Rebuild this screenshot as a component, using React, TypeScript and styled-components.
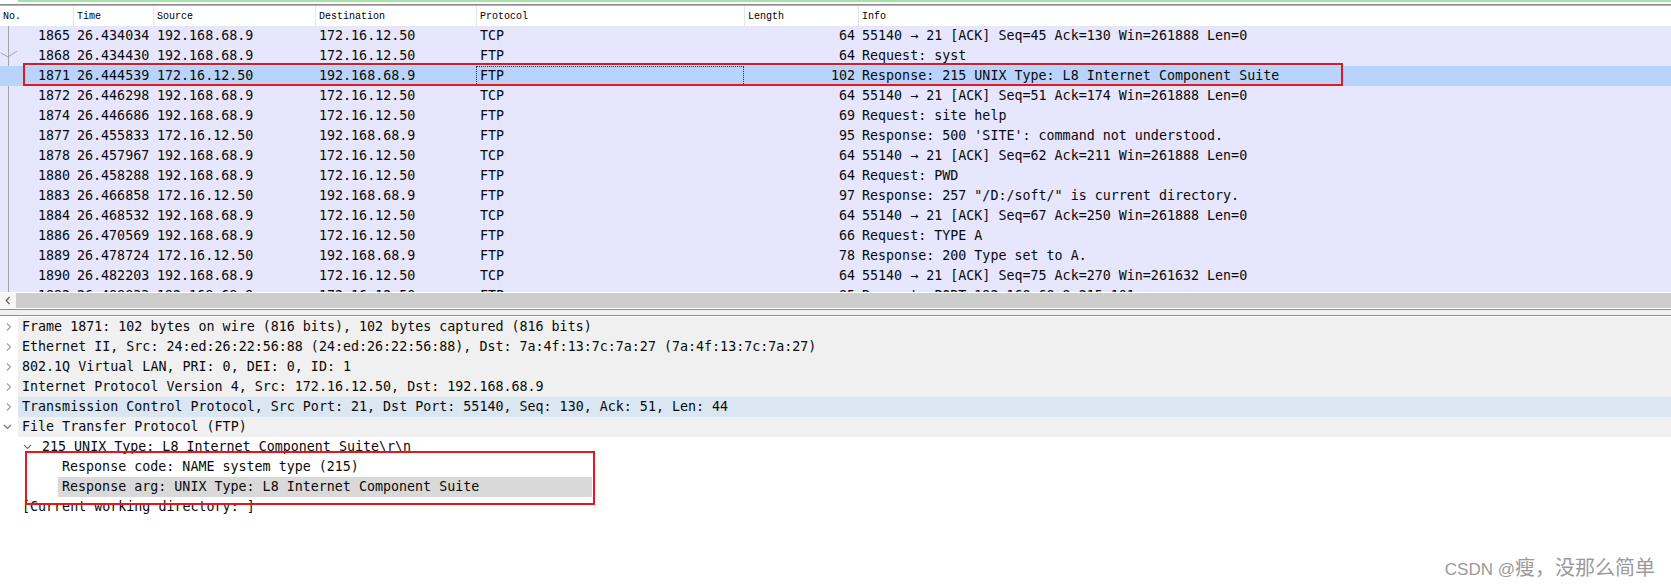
import React from "react";
import styled, { createGlobalStyle } from "styled-components";

const GlobalStyle = createGlobalStyle`
  html, body { margin: 0; padding: 0; background: #ffffff; }
  body { font-family: "DejaVu Sans Mono", "Liberation Mono", monospace; }
`;

const COLS = "73px 80px 162px 161px 268px 114px 1fr";

const Page = styled.div`
  position: relative;
  width: 1671px;
  height: 585px;
  overflow: hidden;
  display: flex;
  flex-direction: column;
  background: #ffffff;
`;

const TopStrip = styled.div`
  flex-shrink: 0;
  height: 6px;
  display: flex;
  flex-direction: column;
`;

const FilterEdge = styled.div`
  height: 2px;
  margin-left: 18px;
  background: #a3e3a3;
`;

const StripGap = styled.div`
  height: 2px;
`;

const StripRule = styled.div`
  height: 2px;
  border-top: 1px solid #8a8a8a;
  background: #b4b4b4;
  box-sizing: border-box;
`;

const HeaderRow = styled.div`
  flex-shrink: 0;
  height: 20px;
  display: grid;
  grid-template-columns: ${COLS};
  font-family: "Liberation Mono", monospace;
  font-size: 10px;
  line-height: 21px;
  color: #000;
  background: #fff;
`;

const HeaderCell = styled.div<{ $first?: boolean }>`
  padding-left: 3px;
  border-left: ${(p) => (p.$first ? "none" : "1px solid #e5e5e5")};
  white-space: nowrap;
  overflow: hidden;
`;

const ListBody = styled.div`
  flex-shrink: 0;
  height: 266px;
  overflow: hidden;
  background: #fff;
`;

const PacketRow = styled.div<{ $selected?: boolean }>`
  position: relative;
  height: 20px;
  display: grid;
  grid-template-columns: ${COLS};
  font-size: 13.33px;
  line-height: 20px;
  color: #0a0a0a;
  white-space: nowrap;
  background: ${(p) => (p.$selected ? "#b9d4fc" : "#e6e6fe")};
`;

const Cell = styled.div<{ $align?: "left" | "right"; $focus?: boolean }>`
  position: relative;
  text-align: ${(p) => p.$align || "left"};
  padding: ${(p) => (p.$align === "right" ? "0 3px 0 0" : "0 0 0 4px")};
  box-sizing: border-box;
  overflow: ${(p) => (p.$align === "right" ? "hidden" : "visible")};
  outline: ${(p) => (p.$focus ? "1px dotted #333" : "none")};
  outline-offset: -1px;
`;

const ThreadLine = styled.span`
  position: absolute;
  left: 8px;
  top: 0;
  bottom: 0;
  width: 1px;
  background: #a4a4a4;
`;

const AckMark = styled.svg`
  position: absolute;
  left: 0;
  top: 5px;
`;

const RedBox = styled.div<{ $left: number; $top: number; $w: number; $h: number }>`
  position: absolute;
  left: ${(p) => p.$left}px;
  top: ${(p) => p.$top}px;
  width: ${(p) => p.$w}px;
  height: ${(p) => p.$h}px;
  border: 2px solid #e8151f;
  box-sizing: border-box;
  pointer-events: none;
  z-index: 3;
`;

const ScrollGap = styled.div<{ $color: string; $h: number }>`
  flex-shrink: 0;
  height: ${(p) => p.$h}px;
  background: ${(p) => p.$color};
`;

const HScrollbar = styled.div`
  flex-shrink: 0;
  height: 15px;
  display: flex;
  background: #f0f0f0;
`;

const ScrollArrow = styled.div`
  width: 16px;
  display: flex;
  align-items: center;
  justify-content: center;
  background: #f6f6f6;
`;

const ScrollThumb = styled.div`
  flex: 1;
  background: #cdcdcd;
`;

const DetailTree = styled.div`
  position: relative;
  flex: 1;
  display: flex;
  flex-direction: column;
  padding-top: 1px;
  background: #fff;
`;

const TreeRow = styled.div`
  display: flex;
  height: 20px;
  line-height: 20px;
  font-size: 13.33px;
  color: #0a0a0a;
  white-space: nowrap;
`;

const Gutter = styled.div<{ $level: number }>`
  flex-shrink: 0;
  width: ${(p) => 18 + p.$level * 20}px;
  display: flex;
  align-items: center;
  justify-content: flex-end;
  padding-right: 6px;
  box-sizing: border-box;
`;

const Label = styled.div<{ $tone: "plain" | "band" | "hover" | "selected" }>`
  padding-left: 4px;
  flex: ${(p) => (p.$tone === "selected" ? "0 0 534px" : "1")};
  box-sizing: border-box;
  background: ${(p) =>
    p.$tone === "band"
      ? "#f0f0f0"
      : p.$tone === "hover"
      ? "#dae6f1"
      : p.$tone === "selected"
      ? "#d9d9d9"
      : "transparent"};
`;

const Watermark = styled.div`
  position: absolute;
  right: 16px;
  top: 552px;
  color: #9a9a9a;
  white-space: nowrap;
  display: flex;
  align-items: baseline;
`;

const WmLatin = styled.span`
  font-family: "Liberation Sans", Arial, sans-serif;
  font-size: 17px;
`;

const WmCjk = styled.span`
  font-family: "Noto Sans CJK SC", sans-serif;
  font-size: 20px;
`;

type Packet = [string, string, string, string, string, string, string];

const packets: Packet[] = [
  ["1865", "26.434034", "192.168.68.9", "172.16.12.50", "TCP", "64", "55140 → 21 [ACK] Seq=45 Ack=130 Win=261888 Len=0"],
  ["1868", "26.434430", "192.168.68.9", "172.16.12.50", "FTP", "64", "Request: syst"],
  ["1871", "26.444539", "172.16.12.50", "192.168.68.9", "FTP", "102", "Response: 215 UNIX Type: L8 Internet Component Suite"],
  ["1872", "26.446298", "192.168.68.9", "172.16.12.50", "TCP", "64", "55140 → 21 [ACK] Seq=51 Ack=174 Win=261888 Len=0"],
  ["1874", "26.446686", "192.168.68.9", "172.16.12.50", "FTP", "69", "Request: site help"],
  ["1877", "26.455833", "172.16.12.50", "192.168.68.9", "FTP", "95", "Response: 500 'SITE': command not understood."],
  ["1878", "26.457967", "192.168.68.9", "172.16.12.50", "TCP", "64", "55140 → 21 [ACK] Seq=62 Ack=211 Win=261888 Len=0"],
  ["1880", "26.458288", "192.168.68.9", "172.16.12.50", "FTP", "64", "Request: PWD"],
  ["1883", "26.466858", "172.16.12.50", "192.168.68.9", "FTP", "97", 'Response: 257 "/D:/soft/" is current directory.'],
  ["1884", "26.468532", "192.168.68.9", "172.16.12.50", "TCP", "64", "55140 → 21 [ACK] Seq=67 Ack=250 Win=261888 Len=0"],
  ["1886", "26.470569", "192.168.68.9", "172.16.12.50", "FTP", "66", "Request: TYPE A"],
  ["1889", "26.478724", "172.16.12.50", "192.168.68.9", "FTP", "78", "Response: 200 Type set to A."],
  ["1890", "26.482203", "192.168.68.9", "172.16.12.50", "TCP", "64", "55140 → 21 [ACK] Seq=75 Ack=270 Win=261632 Len=0"],
  ["1892", "26.488833", "192.168.68.9", "172.16.12.50", "FTP", "85", "Request: PORT 192,168,68,9,215,101"],
];

type TreeItem = {
  level: number;
  arrow?: "closed" | "open";
  tone: "plain" | "band" | "hover" | "selected";
  text: string;
};

const tree: TreeItem[] = [
  { level: 0, arrow: "closed", tone: "band", text: "Frame 1871: 102 bytes on wire (816 bits), 102 bytes captured (816 bits)" },
  { level: 0, arrow: "closed", tone: "band", text: "Ethernet II, Src: 24:ed:26:22:56:88 (24:ed:26:22:56:88), Dst: 7a:4f:13:7c:7a:27 (7a:4f:13:7c:7a:27)" },
  { level: 0, arrow: "closed", tone: "band", text: "802.1Q Virtual LAN, PRI: 0, DEI: 0, ID: 1" },
  { level: 0, arrow: "closed", tone: "band", text: "Internet Protocol Version 4, Src: 172.16.12.50, Dst: 192.168.68.9" },
  { level: 0, arrow: "closed", tone: "hover", text: "Transmission Control Protocol, Src Port: 21, Dst Port: 55140, Seq: 130, Ack: 51, Len: 44" },
  { level: 0, arrow: "open", tone: "band", text: "File Transfer Protocol (FTP)" },
  { level: 1, arrow: "open", tone: "plain", text: "215 UNIX Type: L8 Internet Component Suite\\r\\n" },
  { level: 2, tone: "plain", text: "Response code: NAME system type (215)" },
  { level: 2, tone: "selected", text: "Response arg: UNIX Type: L8 Internet Component Suite" },
  { level: 0, tone: "plain", text: "[Current working directory: ]" },
];

const Chevron: React.FC<{ kind: "closed" | "open" }> = ({ kind }) =>
  kind === "closed" ? (
    <svg width="6" height="10" viewBox="0 0 6 10">
      <polyline points="1,1.5 4.5,5 1,8.5" fill="none" stroke="#9c9c9c" strokeWidth="1.1" />
    </svg>
  ) : (
    <svg width="9" height="6" viewBox="0 0 9 6">
      <polyline points="1,1 4.5,4.5 8,1" fill="none" stroke="#707070" strokeWidth="1.1" />
    </svg>
  );

export default function App() {
  return (
    <>
      <GlobalStyle />
      <Page>
        <TopStrip>
          <FilterEdge />
          <StripGap />
          <StripRule />
        </TopStrip>

        <HeaderRow>
          <HeaderCell $first>No.</HeaderCell>
          <HeaderCell>Time</HeaderCell>
          <HeaderCell>Source</HeaderCell>
          <HeaderCell>Destination</HeaderCell>
          <HeaderCell>Protocol</HeaderCell>
          <HeaderCell>Length</HeaderCell>
          <HeaderCell>Info</HeaderCell>
        </HeaderRow>

        <ListBody>
          {packets.map((p) => {
            const selected = p[0] === "1871";
            return (
              <PacketRow key={p[0]} $selected={selected}>
                <Cell $align="right">
                  {!selected && <ThreadLine />}
                  {p[0] === "1868" && (
                    <AckMark width="18" height="8" viewBox="0 0 18 8">
                      <polyline points="1,2 8,6 17,0" fill="none" stroke="#a4a4a4" strokeWidth="1" />
                    </AckMark>
                  )}
                  {p[0]}
                </Cell>
                <Cell>{p[1]}</Cell>
                <Cell>{p[2]}</Cell>
                <Cell>{p[3]}</Cell>
                <Cell $focus={selected}>{p[4]}</Cell>
                <Cell $align="right">{p[5]}</Cell>
                <Cell>{p[6]}</Cell>
                {selected && <RedBox $left={23} $top={-3} $w={1320} $h={23} />}
              </PacketRow>
            );
          })}
        </ListBody>

        <ScrollGap $color="#ffffff" $h={1} />
        <HScrollbar>
          <ScrollArrow>
            <svg width="6" height="9" viewBox="0 0 6 9">
              <polyline points="4.5,1 1.2,4.5 4.5,8" fill="none" stroke="#606060" strokeWidth="1.2" />
            </svg>
          </ScrollArrow>
          <ScrollThumb />
        </HScrollbar>
        <ScrollGap $color="#ffffff" $h={1} />
        <ScrollGap $color="#8e8e8e" $h={1} />
        <ScrollGap $color="#f0f0f0" $h={5} />
        <ScrollGap $color="#8e8e8e" $h={1} />

        <DetailTree>
          {tree.map((t, i) => (
            <TreeRow key={i}>
              <Gutter $level={t.level}>{t.arrow && <Chevron kind={t.arrow} />}</Gutter>
              <Label $tone={t.tone}>{t.text}</Label>
            </TreeRow>
          ))}
          <RedBox $left={25} $top={135} $w={570} $h={54} />
        </DetailTree>

        <Watermark>
          <WmLatin>CSDN @</WmLatin>
          <WmCjk>瘦，没那么简单</WmCjk>
        </Watermark>
      </Page>
    </>
  );
}
